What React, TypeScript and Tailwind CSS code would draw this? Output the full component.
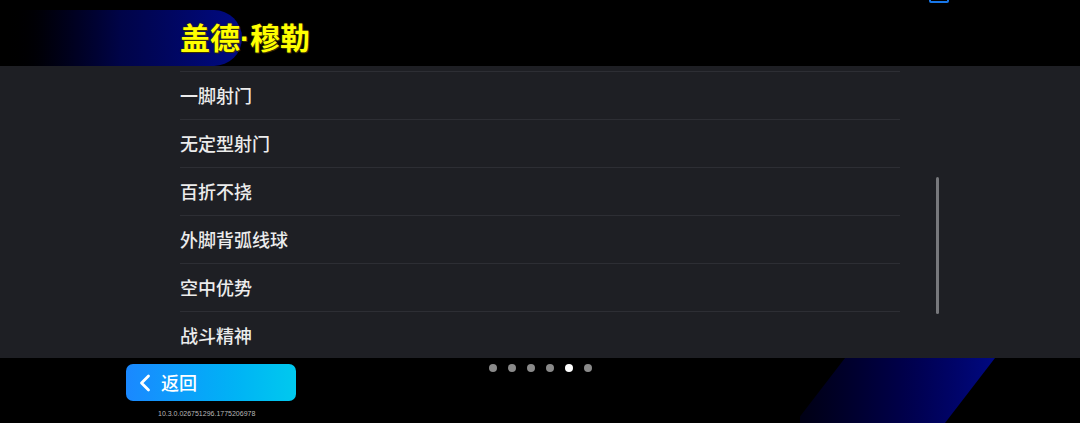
import { ChevronLeft } from "lucide-react";

const skills = ["一脚射门", "无定型射门", "百折不挠", "外脚背弧线球", "空中优势", "战斗精神"];

export default function App() {
  return (
    <div className="relative w-[1080px] h-[423px] overflow-hidden bg-black font-['Noto_Sans_CJK_SC','Noto_Sans',sans-serif] text-white">
      {/* header */}
      <div className="relative h-[66px]">
        <div className="absolute left-0 top-[10px] h-[56px] w-[242px] rounded-r-[28px] bg-gradient-to-r from-black via-[#000448] to-[#000a84]" />
        <div className="absolute left-[929px] top-[-4px] h-[7px] w-[20px] rounded-[2px] border-2 border-[#1877e8]" />
        <h1 className="relative pl-[180px] pt-[17px] text-[30px] leading-[38px] font-bold text-[#ffff00] [text-shadow:0_0_2px_#3a3000,1px_1px_0_#3a3000]">
          盖德<span className="font-['Liberation_Sans',sans-serif]">·</span>穆勒
        </h1>
      </div>

      {/* list panel */}
      <div className="relative h-[292px] overflow-hidden bg-[#1e1f24]">
        <div className="mx-[180px] w-[720px]">
          <div className="h-[6px] border-b border-[#2d2e34]" />
          {skills.map((s) => (
            <div
              key={s}
              className="flex h-[48px] items-center border-b border-[#2d2e34] text-[18px] font-medium text-[#ececec]"
            >
              {s}
            </div>
          ))}
        </div>
        <div className="absolute left-[936px] top-[111px] h-[137px] w-[3px] rounded-full bg-[#77787c]" />
      </div>

      {/* footer */}
      <div className="relative h-[65px]">
        <div className="absolute left-[800px] top-0 h-[65px] w-[200px] bg-gradient-to-r from-[#000014] via-[#000048] to-[#000a84] [clip-path:polygon(45px_0,195px_0,145px_65px,-5px_65px)]" />
        <div className="relative flex items-start">
          <div className="flex flex-col pl-[126px] pt-[6px]">
            <button className="flex h-[37px] w-[170px] items-center gap-[2px] rounded-[7px] bg-gradient-to-r from-[#1a88ff] to-[#00c9ee] pl-[5px] text-[18px] font-medium text-white">
              <ChevronLeft size={28} strokeWidth={2.4} />
              返回
            </button>
            <span className="mt-[9px] pl-[32px] font-['Liberation_Sans',sans-serif] text-[7px] leading-[8px] text-[#b8b8b8]">
              10.3.0.026751296.1775206978
            </span>
          </div>
          <div className="ml-[193px] mt-[6px] flex gap-[11px]">
            {[0, 1, 2, 3, 4, 5].map((i) => (
              <span
                key={i}
                className={`h-[8px] w-[8px] rounded-full ${i === 4 ? "bg-white" : "bg-[#8a8a8a]"}`}
              />
            ))}
          </div>
        </div>
      </div>
    </div>
  );
}
